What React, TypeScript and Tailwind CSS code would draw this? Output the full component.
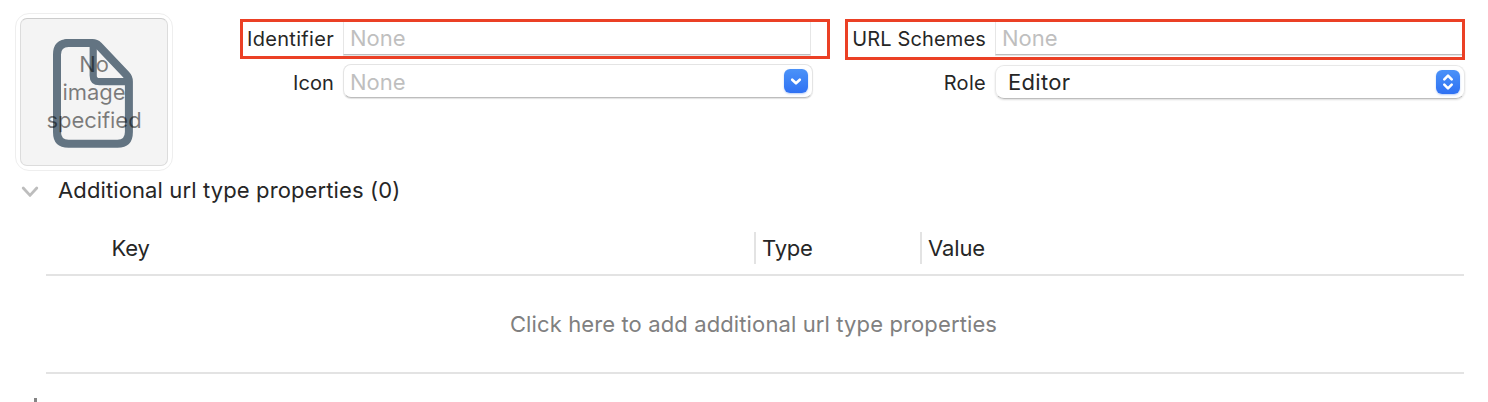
import type { ReactNode } from "react";

function FieldLabel({ className, children }: { className: string; children: ReactNode }) {
  return <span className={`shrink-0 whitespace-nowrap text-right text-[20px] text-[#262626] ${className}`}>{children}</span>;
}

function ImageWell() {
  return (
    <div className="ml-[15px] mt-[13px] h-[158px] w-[158px] shrink-0 rounded-[14px] border border-[#eeeeee] bg-white p-1">
      <div className="relative flex h-[148px] w-[148px] items-center justify-center rounded-[7px] border border-[#dcdcdc] border-t-[#cccccc] bg-[#f4f4f4]">
        <svg className="absolute left-[31px] top-[19px]" width="82" height="111" viewBox="0 0 82 111" fill="none" stroke="#637482" strokeWidth="8" strokeLinejoin="round">
          <path d="M14 5H40.500Q44 5 46.500 7.500L74 36.500Q76.900 39.500 76.900 43.500V94Q76.900 105.800 65.500 105.800H16.500Q5 105.800 5 94V16.500Q5 5 16.500 5Z" />
          <path d="M41.200 5V37.500Q41.200 43.700 47.500 43.700H76" strokeWidth="7.200" />
        </svg>
        <p className="relative text-center text-[22px] leading-[28px] tracking-[-0.05px] text-black/50">
          No
          <br />
          image
          <br />
          specified
        </p>
      </div>
    </div>
  );
}

function BlueButton({ children }: { children: ReactNode }) {
  return (
    <span className="flex h-6 w-6 items-center justify-center rounded-[6px] bg-linear-to-b from-[#4b92f8] to-[#2f71f3] shadow-[0_1px_2px_rgba(50,110,230,0.35)]">
      <svg width="24" height="24" viewBox="0 0 24 24" fill="none" stroke="white" strokeWidth="2.6" strokeLinecap="round" strokeLinejoin="round">
        {children}
      </svg>
    </span>
  );
}

export default function App() {
  return (
    <main className="flex h-[402px] w-[1488px] flex-col overflow-hidden bg-white font-['Inter',sans-serif] text-[#262626]">
      <section className="flex h-[171px] shrink-0">
        <ImageWell />
        <div className="ml-[67px] mt-[19px] w-[590px]">
          <div className="flex h-10 border-[3px] border-[#eb4025]">
            <FieldLabel className="w-[91px] leading-[35px] tracking-[0.3px]">Identifier</FieldLabel>
            <div className="ml-[9px] h-[33px] w-[468px] border-x border-b border-x-[#e6e6e6] border-b-[#bdbdbd] pl-[6px] text-[22px] leading-[33px] text-[#bfbfbf] shadow-[0_1px_0_#e6e6e6]">None</div>
          </div>
          <div className="mt-[5px] flex">
            <FieldLabel className="w-[94px] leading-[38px] tracking-[0.1px]">Icon</FieldLabel>
            <div className="ml-[9px] flex h-[34px] w-[470px] justify-between rounded-[8px] border border-[#e4e4e4] border-b-[#bdbdbd] pl-[6px] pr-[4px] pt-1 shadow-[0_1px_1px_rgba(0,0,0,0.12)]">
              <span className="text-[22px] leading-[26px] text-[#bfbfbf]">None</span>
              <BlueButton>
                <path d="M8.200 10.700L12 14.300L15.800 10.700" />
              </BlueButton>
            </div>
          </div>
        </div>
        <div className="ml-[15px] mt-[19px] w-[620px]">
          <div className="flex h-[41px] border-[3px] border-[#eb4025]">
            <FieldLabel className="w-[138px] leading-[35px] tracking-[0.15px]">URL Schemes</FieldLabel>
            <div className="ml-[9px] h-[33px] flex-1 border-b border-l border-b-[#bdbdbd] border-l-[#e6e6e6] pl-[6px] text-[22px] leading-[33px] text-[#bfbfbf] shadow-[0_1px_0_#e6e6e6]">None</div>
          </div>
          <div className="mt-[5px] flex">
            <FieldLabel className="w-[141px] leading-[36px] tracking-[0.3px]">Role</FieldLabel>
            <div className="ml-[9px] flex h-[34px] w-[470px] justify-between rounded-[9px] border border-[#e8e8e8] border-b-[#bdbdbd] pl-3 pr-1 pt-1 shadow-[0_1px_2px_rgba(0,0,0,0.14)]">
              <span className="text-[22px] leading-[24px] tracking-[0.3px]">Editor</span>
              <BlueButton>
                <path d="M8.300 9.300L12 5.600L15.700 9.300M8.300 14.700L12 18.400L15.700 14.700" />
              </BlueButton>
            </div>
          </div>
        </div>
      </section>

      <div className="flex h-[39px] shrink-0 items-center pl-[21px]">
        <svg className="mt-[2px]" width="18" height="12" viewBox="0 0 18 12" fill="none" stroke="#bdbdbd" strokeWidth="2.800" strokeLinecap="round" strokeLinejoin="round">
          <path d="M2.200 2L9 9.400L15.800 2" />
        </svg>
        <h2 className="ml-[19px] text-[22px] leading-[39px] tracking-[0.12px]">Additional url type properties (0)</h2>
      </div>

      <section className="ml-[46px] mt-[22px] w-[1418px] shrink-0">
        <div className="flex h-[44px] border-b-2 border-[#e3e3e3] text-[22px] leading-[33px]">
          <div className="w-[708px] pl-[65.500px] tracking-[-0.1px]">Key</div>
          <div className="h-[32px] w-[166px] border-l-2 border-[#e3e3e3] pl-[6px] tracking-[-0.2px]">Type</div>
          <div className="h-[32px] border-l-2 border-[#e3e3e3] pl-[6px] tracking-[-0.1px]">Value</div>
        </div>
        <div className="h-[98px] border-b-2 border-[#e3e3e3] pr-[3px] text-center text-[22px] leading-[97px] tracking-[0.12px] text-[#808080]">Click here to add additional url type properties</div>
      </section>
      <span className="ml-[34px] mt-[24px] h-1 w-[3px] shrink-0 bg-[#858585]" />
    </main>
  );
}
